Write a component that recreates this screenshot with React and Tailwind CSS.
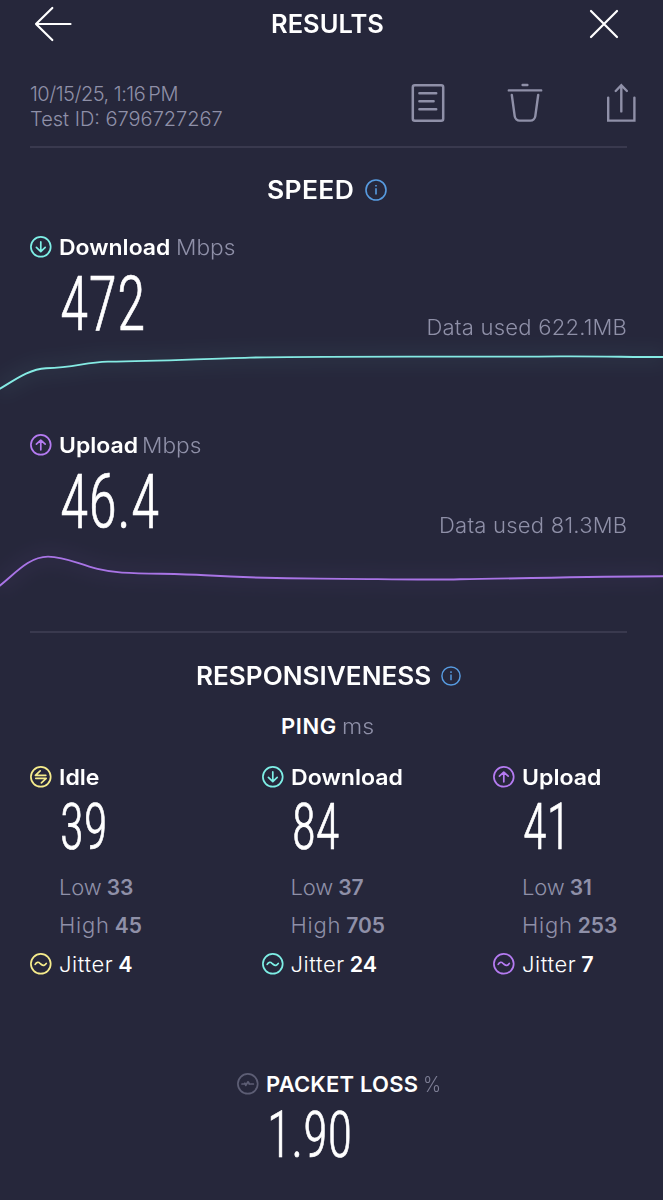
const TEAL = 'text-[#7eefe6]';
const PURPLE = 'text-[#b57bf2]';
const YELLOW = 'text-[#f6ec8c]';
const MUTED = 'text-[#8f90a8]';

function Ring({ className = '', children }) {
  return (
    <svg
      viewBox="0 0 22 22"
      className={`-mt-px h-[22px] w-[22px] shrink-0 ${className}`}
      fill="none"
      stroke="currentColor"
      strokeWidth="1.7"
      strokeLinecap="round"
      strokeLinejoin="round"
    >
      <circle cx="10.8" cy="10.8" r="9.9" />
      {children}
    </svg>
  );
}

const DownIcon = () => (
  <Ring className={TEAL}>
    <path d="M10.8 5.9v9.5M6.4 11.4l4.4 4.2 4.4-4.2" />
  </Ring>
);

const UpIcon = () => (
  <Ring className={PURPLE}>
    <path d="M10.8 15.8V6.1M6.4 10.2l4.4-4.1 4.4 4.1" />
  </Ring>
);

const IdleIcon = () => (
  <Ring className={YELLOW}>
    <path d="M10.2 4.8 5.4 9.3h10.4M5.8 12.3h10.4l-4.8 4.5" />
  </Ring>
);

const JitterIcon = ({ className }) => (
  <Ring className={className}>
    <path d="M5.2 11.4c1.4-2.5 3.2-2.7 4.8-1.1l1.4 1.2c1.7 1.5 3.6 1.1 4.9-1.1" />
  </Ring>
);

const LossIcon = () => (
  <Ring className="text-[#5d5e75]">
    <path d="M5 11h2.6M7.8 10.2l1 2.2 2.2-3.6M11.4 9.2l.9 1.8M13.6 11h2.8" />
  </Ring>
);

function InfoIcon({ className }) {
  return (
    <svg viewBox="0 0 22 22" className={`-mt-px shrink-0 text-[#579be0] ${className}`} fill="none" stroke="currentColor" strokeWidth="1.6">
      <circle cx="11" cy="11" r="10" />
      <path d="M11 9.3v6.3M11 5.9v1.7" />
    </svg>
  );
}

function Digits({ className, children }) {
  return (
    <span className={`origin-left font-['Roboto_Condensed','Roboto',sans-serif] font-light [-webkit-text-stroke:0.7px_white] ${className}`}>
      {children}
    </span>
  );
}

function SpeedTest({ icon, name, nameWidth, value, used, children }) {
  return (
    <section>
      <div className="flex h-[30px] items-center pl-[30px]">
        {icon}
        <h3 className={`ml-[7px] origin-left scale-x-[1.045] text-[22px] leading-[30px] font-semibold ${nameWidth}`}>{name}</h3>
        <span className={`origin-left scale-x-[1.03] text-[22px] font-light ${MUTED}`}>Mbps</span>
      </div>
      <div className="flex h-[80px] justify-between pr-[36px] pl-[60px]">
        <Digits className="mt-[1px] scale-x-[0.77] text-[76px] leading-[82px]">{value}</Digits>
        <span className={`mt-[52px] origin-right scale-x-[1.05] text-[21px] leading-[28px] font-light tracking-[0.2px] ${MUTED}`}>
          {used}
        </span>
      </div>
      {children}
    </section>
  );
}

function Curve({ d, color, id }) {
  return (
    <svg viewBox="0 0 663 88" className="block h-[88px] w-full overflow-visible" fill="none">
      <defs>
        <filter id={id} filterUnits="userSpaceOnUse" x="-40" y="-60" width="743" height="220">
          <feGaussianBlur stdDeviation="9" />
        </filter>
      </defs>
      <path d={d} stroke={color} strokeWidth="16" opacity="0.055" filter={`url(#${id})`} />
      <path d={d} stroke={color} strokeWidth="1.9" />
    </svg>
  );
}

function Stat({ label, value, labelClass }) {
  return (
    <p className={`flex h-[38.5px] items-center pl-[29px] ${MUTED}`}>
      <span className={`text-[22px] font-light ${labelClass}`}>{label}</span>
      <span className="ml-[5px] text-[21px] font-semibold tracking-[-0.1px]">{value}</span>
    </p>
  );
}

function Ping({ icon, name, value, low, high, jitter, tone }) {
  return (
    <div className="w-[231.5px] shrink-0">
      <div className="flex h-[30px] items-center">
        {icon}
        <h4 className="ml-[7px] origin-left scale-x-[1.05] text-[22px] leading-[30px] font-semibold">{name}</h4>
      </div>
      <div className="flex h-[76px] pl-[30px]">
        <Digits className="scale-x-[0.75] text-[65px] leading-[71px]">{value}</Digits>
      </div>
      <Stat label="Low" value={low} labelClass="tracking-[-0.1px]" />
      <Stat label="High" value={high} labelClass="tracking-[0.8px]" />
      <p className="flex h-[38px] items-center">
        <JitterIcon className={tone} />
        <span className="ml-[7px] text-[22px] font-light tracking-[0.6px]">Jitter</span>
        <span className="ml-[5px] text-[21.5px] font-semibold">{jitter}</span>
      </p>
    </div>
  );
}

const Divider = () => <hr className="mr-[36px] ml-[30px] h-[2px] border-0 bg-[#39394e]" />;

export default function App() {
  return (
    <main className="flex h-[1200px] w-[663px] flex-col overflow-hidden bg-[#26273b] font-['Inter',sans-serif] whitespace-nowrap text-white">
      <header className="flex h-[48px] items-center">
        <svg viewBox="0 0 38 36" className="ml-[34px] h-[36px] w-[38px]" fill="none" stroke="currentColor" strokeWidth="2.2" strokeLinecap="round" strokeLinejoin="round">
          <path d="M36.5 18H2M18.3 2 2 18l16.3 16" />
        </svg>
        <h1 className="ml-[199px] w-[114px] origin-left scale-x-[1.02] pt-[2px] text-[25px] font-semibold">RESULTS</h1>
        <svg viewBox="0 0 30 30" className="ml-[204px] h-[30px] w-[30px]" fill="none" stroke="currentColor" strokeWidth="2.2" strokeLinecap="round">
          <path d="M2 2l26 26M28 2 2 28" />
        </svg>
      </header>

      <div className="mt-[34px] flex h-[64px] justify-between pr-[26px] pl-[30px]">
        <div className={`text-[20px] leading-[25px] font-light ${MUTED}`}>
          <p className="tracking-[-0.5px]">10/15/25, 1:16{'\u2009'}PM</p>
          <p>Test ID: 6796727267</p>
        </div>
        <div className={`flex h-[42px] w-[226px] items-center justify-between ${MUTED}`}>
          <svg viewBox="0 0 34 40" className="h-[40px] w-[34px]" fill="none" stroke="currentColor" strokeWidth="2.5" strokeLinecap="round">
            <rect x="1.8" y="2.2" width="30.4" height="35.6" rx="2" />
            <path d="M8.4 10.2h16.8M8.4 18.2h14.2M8.4 26.2h16.8" />
          </svg>
          <svg viewBox="0 0 36 40" className="h-[40px] w-[36px]" fill="none" stroke="currentColor" strokeWidth="2.4" strokeLinecap="round">
            <path d="M15.6 2h4.8M1.8 7.4h32.4M4.8 12l2.9 21.2a5 5 0 0 0 5 4.4h10.6a5 5 0 0 0 5-4.4L31.2 12" />
          </svg>
          <svg viewBox="0 0 32 40" className="h-[40px] w-[32px]" fill="none" stroke="currentColor" strokeWidth="2.4" strokeLinecap="round">
            <path d="M3.2 14.6v23h26.2v-23M16.3 28.4V2.4M10.7 8l5.6-5.8L21.9 8" />
          </svg>
        </div>
      </div>
      <Divider />

      <div className="mt-[22px] flex h-[40px] items-center pl-[267px]">
        <h2 className="w-[98px] pt-[2px]">
          <span className="inline-block origin-left scale-x-[1.06] text-[25px] font-semibold tracking-[0.3px]">SPEED</span>
        </h2>
        <InfoIcon className="h-[22px] w-[22px]" />
      </div>

      <div className="mt-[22px]">
        <SpeedTest icon={<DownIcon />} name="Download" nameWidth="w-[117px]" value="472" used="Data used 622.1MB">
          <Curve
            id="glow-down"
            color="#85ebe4"
            d="M-2 47.8C12 40 28 27 46 26.2C76 25.5 84 20.2 108 19.6C160 19.4 200 16.8 250 15.6C330 13.8 480 15.2 560 14.4C600 14.2 630 15 665 15"
          />
        </SpeedTest>
        <SpeedTest icon={<UpIcon />} name="Upload" nameWidth="w-[83px]" value="46.4" used="Data used 81.3MB">
          <Curve
            id="glow-up"
            color="#a974e6"
            d="M-2 47C14 35 28 16.6 48 16.6C72 16.6 86 30.5 122 32.6C150 34 175 33.6 205 35.2C240 37.2 275 38.6 320 38.6C370 38.6 420 40.4 460 39.2C520 38.6 580 36.4 665 36.2"
          />
        </SpeedTest>
      </div>
      <div className="mt-[3px]">
        <Divider />
      </div>

      <div className="mt-[23px] flex h-[40px] items-center pl-[196px]">
        <h2 className="w-[245px] pt-[2px]">
          <span className="inline-block origin-left scale-x-[1.045] text-[25px] font-semibold">RESPONSIVENESS</span>
        </h2>
        <InfoIcon className="h-[20px] w-[20px]" />
      </div>
      <div className="mt-[14px] flex h-[32px] items-center pl-[281px] text-[22px]">
        <h3 className="font-semibold tracking-[0.6px]">PING</h3>
        <span className={`ml-[5px] origin-left scale-x-[1.05] font-light ${MUTED}`}>ms</span>
      </div>

      <div className="mt-[20px] flex pl-[30px]">
        <Ping icon={<IdleIcon />} tone={YELLOW} name="Idle" value="39" low="33" high="45" jitter="4" />
        <Ping icon={<DownIcon />} tone={TEAL} name="Download" value="84" low="37" high="705" jitter="24" />
        <Ping icon={<UpIcon />} tone={PURPLE} name="Upload" value="41" low="31" high="253" jitter="7" />
      </div>

      <section className="mt-[86px] pl-[237px]">
        <div className="flex h-[30px] items-center text-[22px]">
          <LossIcon />
          <h3 className="ml-[7px] font-semibold tracking-[0.2px]">PACKET LOSS</h3>
          <span className="ml-[5px] origin-left scale-x-[0.88] font-light text-[#7d7e95]">%</span>
        </div>
        <div className="flex h-[76px] pl-[30px]">
          <Digits className="scale-x-[0.77] text-[65px] leading-[72px]">1.90</Digits>
        </div>
      </section>
    </main>
  );
}
